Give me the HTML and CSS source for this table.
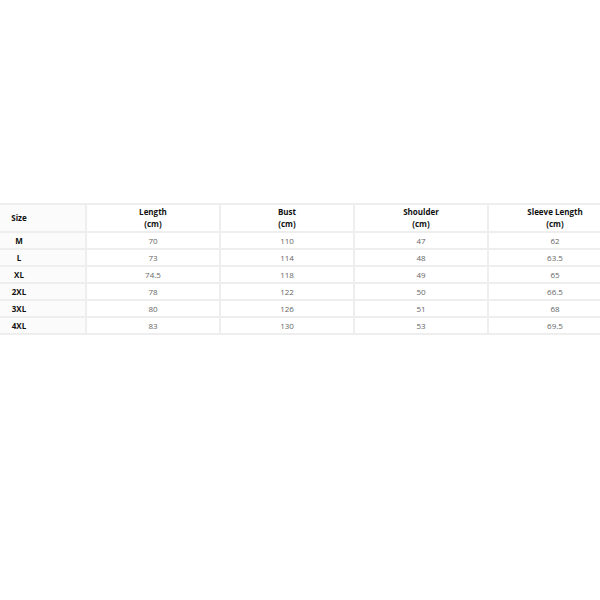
FILE: index.html
```html
<!DOCTYPE html>
<html>
<head>
<meta charset="utf-8">
<link rel="stylesheet" href="styles.css">
</head>
<body>
<div class="page">
  <table class="size-table">
    <thead>
      <tr>
        <th class="size-col">Size</th>
        <th>Length<br>(cm)</th>
        <th>Bust<br>(cm)</th>
        <th>Shoulder<br>(cm)</th>
        <th>Sleeve Length<br>(cm)</th>
      </tr>
    </thead>
    <tbody>
      <tr><th class="size-col">M</th><td>70</td><td>110</td><td>47</td><td>62</td></tr>
      <tr><th class="size-col">L</th><td>73</td><td>114</td><td>48</td><td>63.5</td></tr>
      <tr><th class="size-col">XL</th><td>74.5</td><td>118</td><td>49</td><td>65</td></tr>
      <tr><th class="size-col">2XL</th><td>78</td><td>122</td><td>50</td><td>66.5</td></tr>
      <tr><th class="size-col">3XL</th><td>80</td><td>126</td><td>51</td><td>68</td></tr>
      <tr><th class="size-col">4XL</th><td>83</td><td>130</td><td>53</td><td>69.5</td></tr>
    </tbody>
  </table>
</div>
</body>
</html>
```
FILE: styles.css
```css
html, body {
  margin: 0;
  padding: 0;
  background: #fff;
  overflow: hidden;
}
.page {
  width: 600px;
  height: 600px;
  overflow: hidden;
  padding-top: 203px;
  box-sizing: border-box;
}
.size-table {
  margin-left: -49px;
  width: 672px;
  table-layout: fixed;
  border-collapse: collapse;
  font-family: "Open Sans", "Liberation Sans", sans-serif;
  font-size: 8px;
}
.size-table th,
.size-table td {
  border: 2px solid #eeeeee;
  text-align: center;
  padding: 0;
  height: 15px;
  line-height: 12px;
}
.size-table thead th {
  height: 26px;
  color: #111;
  font-weight: 700;
}
.size-table tbody th {
  color: #111;
  font-weight: 700;
}
.size-table td {
  color: #666;
  font-weight: 400;
}
.size-col {
  background: #fbfbfb;
}
```
